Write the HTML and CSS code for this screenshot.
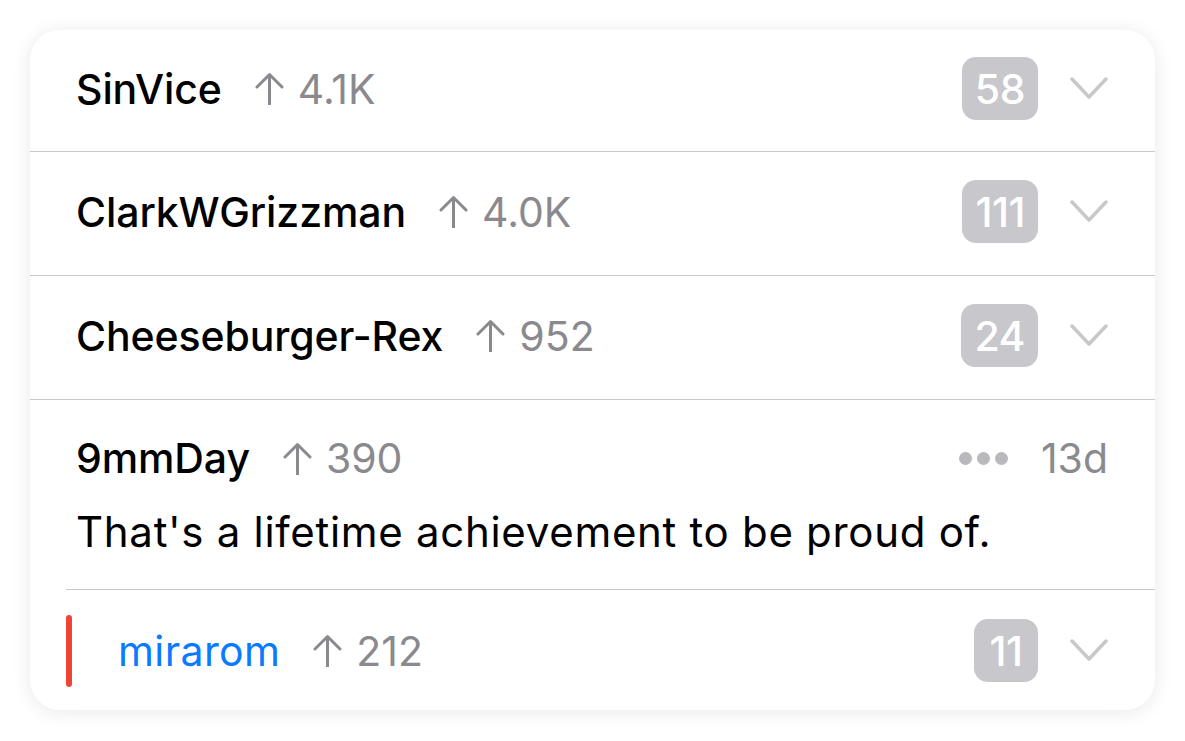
FILE: index.html
```html
<!DOCTYPE html>
<html lang="en">
<head>
<meta charset="utf-8">
<title>Comments</title>
<link rel="stylesheet" href="styles.css">
</head>
<body>
<div class="card">
  <div class="row first">
    <div class="meta">
      <span class="name">SinVice</span>
      <span class="score"><svg class="up" viewBox="0 0 31 33"><path d="M15.5 3 V33 M3 15 L15.5 2.5 L28 15"/></svg>4.1K</span>
    </div>
    <div class="right">
      <span class="badge">58</span>
      <svg class="chev" viewBox="0 0 38 23"><path d="M2 2 L19 20 L36 2"/></svg>
    </div>
  </div>
  <div class="row">
    <div class="meta">
      <span class="name">ClarkWGrizzman</span>
      <span class="score"><svg class="up" viewBox="0 0 31 33"><path d="M15.5 3 V33 M3 15 L15.5 2.5 L28 15"/></svg>4.0K</span>
    </div>
    <div class="right">
      <span class="badge">111</span>
      <svg class="chev" viewBox="0 0 38 23"><path d="M2 2 L19 20 L36 2"/></svg>
    </div>
  </div>
  <div class="row">
    <div class="meta">
      <span class="name">Cheeseburger-Rex</span>
      <span class="score"><svg class="up" viewBox="0 0 31 33"><path d="M15.5 3 V33 M3 15 L15.5 2.5 L28 15"/></svg>952</span>
    </div>
    <div class="right">
      <span class="badge">24</span>
      <svg class="chev" viewBox="0 0 38 23"><path d="M2 2 L19 20 L36 2"/></svg>
    </div>
  </div>
  <div class="comment">
    <div class="head">
      <div class="meta">
        <span class="name">9mmDay</span>
        <span class="score"><svg class="up" viewBox="0 0 31 33"><path d="M15.5 3 V33 M3 15 L15.5 2.5 L28 15"/></svg>390</span>
      </div>
      <div class="right">
        <span class="dots"><i></i><i></i><i></i></span>
        <span class="age">13d</span>
      </div>
    </div>
    <p class="body">That's a lifetime achievement to be proud of.</p>
  </div>
  <div class="reply">
    <div class="reply-row">
      <div class="meta">
        <span class="bar"></span>
        <span class="name blue">mirarom</span>
        <span class="score"><svg class="up" viewBox="0 0 31 33"><path d="M15.5 3 V33 M3 15 L15.5 2.5 L28 15"/></svg>212</span>
      </div>
      <div class="right">
        <span class="badge">11</span>
        <svg class="chev" viewBox="0 0 38 23"><path d="M2 2 L19 20 L36 2"/></svg>
      </div>
    </div>
  </div>
</div>
</body>
</html>
```

FILE: styles.css
```css
* { box-sizing: border-box; }
html, body { margin: 0; background: #ffffff; }
body {
  padding: 30px;
  font-family: Inter, "Noto Sans", "Liberation Sans", sans-serif;
  font-size: 41px;
  line-height: 50px;
  color: #000;
}
.card {
  width: 1125px;
  height: 680px;
  background: #fff;
  border-radius: 30px;
  box-shadow: 0 2px 20px rgba(0, 0, 0, 0.09);
  overflow: hidden;
}
.row {
  height: 124px;
  display: flex;
  align-items: center;
  justify-content: space-between;
  padding: 0 47px 4px 46px;
  border-bottom: 1px solid #c8c8cc;
}
.row.first { height: 122px; }
.meta { display: flex; align-items: center; }
.name { font-weight: 500; letter-spacing: -0.1px; }
.name.blue { color: #0a7aff; font-weight: 400; letter-spacing: 0.4px; }
.score {
  display: flex;
  align-items: center;
  color: #8a8a8e;
  margin-left: 32px;
  letter-spacing: 0;
}
.up {
  width: 31px;
  height: 33px;
  margin-right: 13px;
  fill: none;
  stroke: #8a8a8e;
  stroke-width: 3;
  stroke-linecap: round;
  stroke-linejoin: round;
}
.right { display: flex; align-items: center; }
.badge {
  height: 63px;
  min-width: 64px;
  padding: 0 13px;
  border-radius: 14px;
  background: #c7c7cc;
  color: #fff;
  font-weight: 500;
  display: flex;
  align-items: center;
  justify-content: center;
  letter-spacing: -0.5px;
}
.chev {
  width: 38px;
  height: 23px;
  margin-left: 32px;
  fill: none;
  stroke: #c7c7cc;
  stroke-width: 3.5;
  stroke-linecap: round;
  stroke-linejoin: round;
}
.comment {
  height: 189px;
  padding: 33px 47px 0 46px;
}
.head { display: flex; align-items: center; justify-content: space-between; }
.dots { display: flex; gap: 5px; }
.dots i {
  display: block;
  width: 13px;
  height: 13px;
  border-radius: 50%;
  background: #b9b9bd;
}
.age { color: #8a8a8e; margin-left: 33px; }
.body {
  margin: 24px 0 0;
  font-size: 42px;
  letter-spacing: 0.7px;
}
.reply {
  margin-left: 36px;
  border-top: 1px solid #c8c8cc;
}
.reply-row {
  height: 121px;
  display: flex;
  align-items: center;
  justify-content: space-between;
  padding: 0 47px 0 0;
}
.bar {
  width: 6px;
  height: 72px;
  border-radius: 3px;
  background: #f04436;
  margin-right: 46px;
}
```
